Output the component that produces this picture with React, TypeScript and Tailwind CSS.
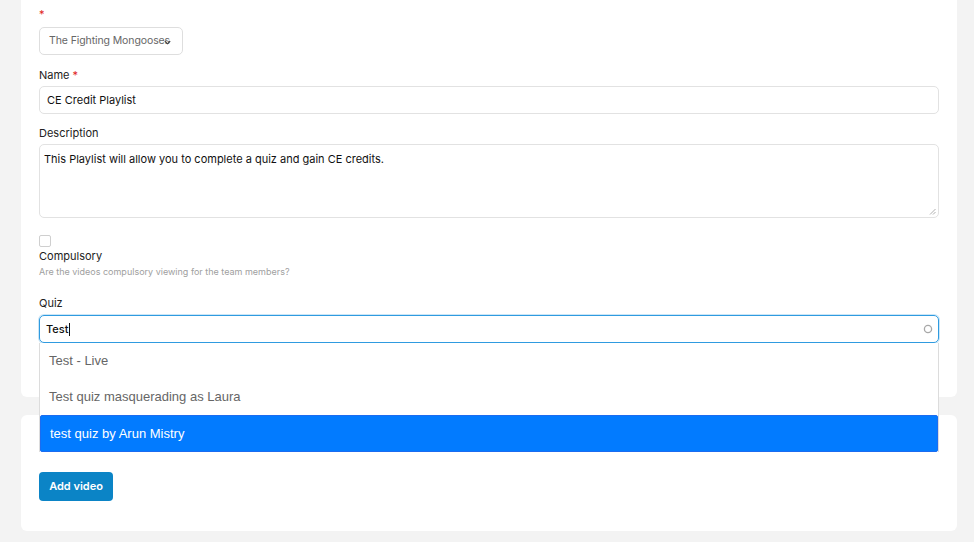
const options = [
  { label: "Test - Live", active: false },
  { label: "Test quiz masquerading as Laura", active: false },
  { label: "test quiz by Arun Mistry", active: true },
];

function Label({ text, required }: { text?: string; required?: boolean }) {
  return (
    <p className="h-[14px] text-[11px] leading-[14px] text-[#222]">
      {text}
      {required && <span className="ml-[3px] text-[#e0211b]">*</span>}
    </p>
  );
}

export default function App() {
  return (
    <div
      className="min-h-[542px] bg-[#f3f3f3] pl-[21px] pr-[17px] pb-[12px] text-[#222]"
      style={{ fontFamily: "Inter, 'Liberation Sans', Arial, sans-serif" }}
    >
      <div className="relative rounded-b-md bg-white px-[18px] pt-[7px] pb-[54px]">
        <p className="h-[14px] text-[11px] leading-[14px] text-[#e0211b]">*</p>
        <div className="relative mt-[6px] flex h-[28px] w-[144px] items-center overflow-hidden rounded-[5px] border border-[#dedede] bg-white pl-[9px]">
          <span className="whitespace-nowrap text-[10.5px] tracking-[-0.1px] text-[#666]">The Fighting Mongooses</span>
          <svg width="7" height="5" viewBox="0 0 7 5" className="absolute right-[11px] top-[12px]">
            <path d="M0.8 1 L3.5 3.8 L6.2 1" fill="none" stroke="#444" strokeWidth="1.1" />
          </svg>
        </div>

        <div className="mt-[13px]">
          <Label text="Name" required />
        </div>
        <div className="mt-[4px] flex h-[28px] items-center rounded-[5px] border border-[#e2e2e2] px-[7px] text-[11px] text-[#111]">
          CE Credit Playlist
        </div>

        <div className="mt-[12px]">
          <Label text="Description" />
        </div>
        <div className="relative mt-[4px] h-[74px] rounded-[5px] border border-[#e2e2e2] px-[4px] pt-[6px] text-[11px] text-[#111]">
          This Playlist will allow you to complete a quiz and gain CE credits.
          <svg width="7" height="7" viewBox="0 0 7 7" className="absolute right-[2px] bottom-[2px]">
            <path d="M6.5 1 L1 6.5 M6.5 4 L4 6.5" stroke="#999" strokeWidth="0.8" />
          </svg>
        </div>

        <div className="mt-[17px] h-[12px] w-[12px] rounded-[2px] border border-[#cfcfcf] bg-white" />
        <p className="mt-[2px] h-[14px] text-[11px] leading-[14px] text-[#222]">Compulsory</p>
        <p className="mt-[3px] h-[12px] text-[9px] leading-[12px] text-[#a0a0a0]">
          Are the videos compulsory viewing for the team members?
        </p>

        <div className="mt-[18px]">
          <Label text="Quiz" />
        </div>
        <div className="relative mt-[5px]">
          <div className="flex h-[28px] items-center rounded-[5px] border border-[#2f9be0] px-[6px] text-[11px] font-medium text-[#111] shadow-[0_0_0_1px_rgba(47,155,224,0.25)]">
            Test
            <span className="ml-[1px] h-[13px] w-px bg-[#111]" />
            <svg width="10" height="10" viewBox="0 0 10 10" className="ml-auto -mr-[1px]">
              <circle cx="5" cy="5" r="3.6" fill="none" stroke="#a8a8a8" strokeWidth="1.3" />
            </svg>
          </div>
          <ul
            className="absolute top-[28px] left-0 right-0 z-10 border-x border-[#dcdcdc] bg-white"
            style={{ fontFamily: "'Liberation Sans', Arial, sans-serif" }}
          >
            {options.map((o) => (
              <li
                key={o.label}
                className={
                  o.active
                    ? "flex h-[37px] items-center rounded-[2px] border border-[#1c6cf0] bg-[#027bff] px-[9px] text-[13px] text-white"
                    : "flex h-[36px] items-center px-[9px] text-[13px] text-[#666]"
                }
              >
                {o.label}
              </li>
            ))}
          </ul>
        </div>
      </div>

      <div className="mt-[18px] rounded-md bg-white px-[18px] pt-[57px] pb-[30px]">
        <button className="h-[29px] w-[74px] rounded-[4px] bg-[#0b84c6] text-[11px] font-semibold text-white">
          Add video
        </button>
      </div>
    </div>
  );
}
